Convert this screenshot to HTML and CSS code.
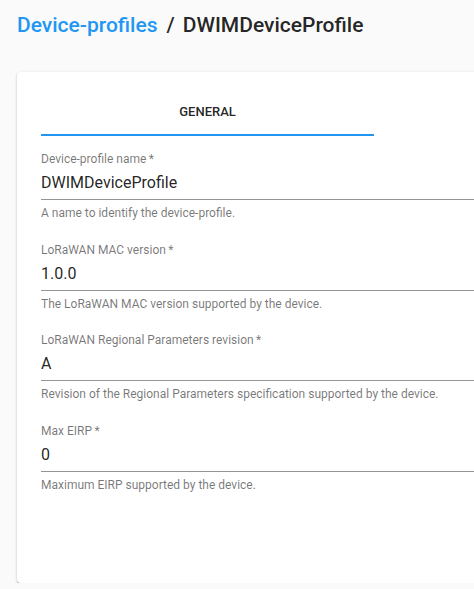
FILE: index.html
```html
<!DOCTYPE html>
<html>
<head>
<meta charset="utf-8">
<link rel="stylesheet" href="styles.css">
</head>
<body>
<div class="page">
  <h1 class="title"><a class="crumb">Device-profiles</a><span class="sep">/</span><span class="current">DWIMDeviceProfile</span></h1>
  <div class="card">
    <div class="tabs">
      <div class="tab active">GENERAL</div>
    </div>
    <form class="form">
      <div class="field">
        <label class="label">Device-profile name&thinsp;*</label>
        <div class="input">DWIMDeviceProfile</div>
        <p class="helper">A name to identify the device-profile.</p>
      </div>
      <div class="field">
        <label class="label">LoRaWAN MAC version&thinsp;*</label>
        <div class="input">1.0.0</div>
        <p class="helper">The LoRaWAN MAC version supported by the device.</p>
      </div>
      <div class="field">
        <label class="label">LoRaWAN Regional Parameters revision&thinsp;*</label>
        <div class="input">A</div>
        <p class="helper">Revision of the Regional Parameters specification supported by the device.</p>
      </div>
      <div class="field">
        <label class="label">Max EIRP&thinsp;*</label>
        <div class="input">0</div>
        <p class="helper">Maximum EIRP supported by the device.</p>
      </div>
    </form>
  </div>
</div>
</body>
</html>
```

FILE: styles.css
```css
html, body {
  margin: 0;
  padding: 0;
  background: #fafafa;
  font-family: Roboto, "Liberation Sans", sans-serif;
  overflow: hidden;
}
.page {
  padding: 13px 0 0 17px;
  width: 640px;
}
.title {
  margin: 0;
  font-size: 21px;
  font-weight: 500;
  line-height: 24px;
  color: rgba(0,0,0,0.87);
  display: flex;
  align-items: baseline;
}
.crumb {
  color: #2196f3;
}
.sep {
  margin: 0 8px 0 9px;
}
.card {
  margin-top: 35px;
  background: #fff;
  border-radius: 4px;
  box-shadow: 0 1px 3px rgba(0,0,0,0.2), 0 1px 1px rgba(0,0,0,0.14), 0 2px 1px -1px rgba(0,0,0,0.12);
  padding: 16px 24px 92px;
  height: 403px;
}
.tabs {
  display: flex;
}
.tab {
  width: 333px;
  height: 46px;
  border-bottom: 2px solid #2196f3;
  display: flex;
  align-items: center;
  justify-content: center;
  font-size: 13px;
  font-weight: 500;
  color: rgba(0,0,0,0.87);
}
.form {
  display: flex;
  flex-direction: column;
  gap: 21.67px;
  padding-top: 15px;
}
.field {
  display: flex;
  flex-direction: column;
}
.label {
  font-size: 12px;
  line-height: 16px;
  height: 16px;
  color: rgba(0,0,0,0.54);
}
.input {
  font-size: 16px;
  line-height: 19px;
  padding: 6px 0 7px;
  color: rgba(0,0,0,0.87);
  border-bottom: 1px solid rgba(0,0,0,0.42);
}
.helper {
  margin: 6px 0 0;
  font-size: 12px;
  line-height: 14px;
  color: rgba(0,0,0,0.54);
}
```
